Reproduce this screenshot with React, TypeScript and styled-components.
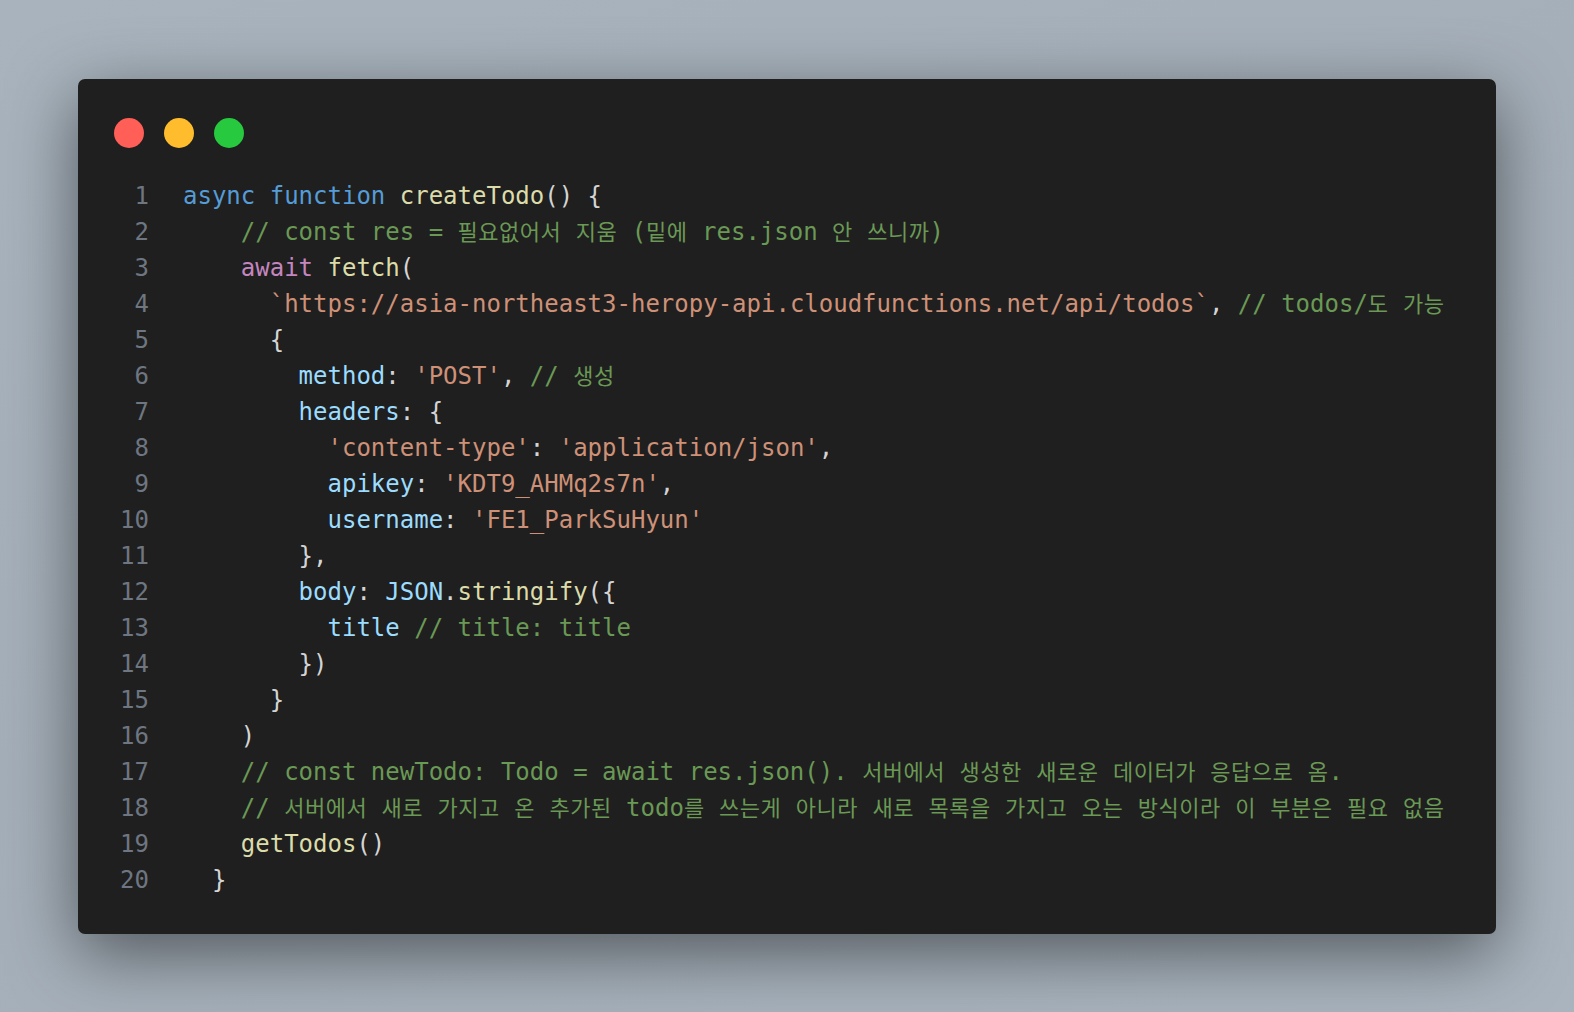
import React from "react";
import styled, { createGlobalStyle } from "styled-components";

const Global = createGlobalStyle`
  html, body { margin: 0; padding: 0; }
  body {
    background: linear-gradient(160deg, #a8b3bd 0%, #a4aeb8 50%, #a9b4be 100%);
    font-family: "DejaVu Sans Mono", "Liberation Mono", monospace;
  }
`;

const Stage = styled.div`
  min-height: 100vh;
  display: flex;
  align-items: center;
  justify-content: center;
`;

const Window = styled.div`
  width: 1418px;
  box-sizing: border-box;
  padding: 39px 36px 36px 36px;
  background: #1f1f1f;
  border-radius: 7px;
  box-shadow: 0 20px 68px rgba(0, 0, 0, 0.5);
  display: flex;
  flex-direction: column;
  gap: 30px;
`;

const Controls = styled.div`
  display: flex;
  gap: 20px;
  height: 30px;
`;

const Dot = styled.span<{ $c: string }>`
  width: 30px;
  height: 30px;
  border-radius: 50%;
  background: ${(p) => p.$c};
`;

const Code = styled.div`
  display: flex;
  flex-direction: column;
  font-family: "DejaVu Sans Mono", "Liberation Mono", monospace;
  font-size: 24px;
  line-height: 36px;
  color: #d4d4d4;
`;

const Row = styled.div`
  display: flex;
  height: 36px;
  white-space: pre;
`;

const Num = styled.span`
  width: 35px;
  flex: none;
  text-align: right;
  color: #6e7681;
  margin-right: 34px;
`;

const colors: Record<string, string> = {
  k: "#569cd6",
  f: "#dcdcaa",
  c: "#6a9955",
  a: "#c586c0",
  s: "#ce9178",
  p: "#9cdcfe",
  j: "#9cdcfe",
  t: "#d4d4d4",
};

const Tok = styled.span<{ $k: string }>`
  color: ${(p) => colors[p.$k]};
`;

const Ko = styled.span`
  font-family: "Noto Sans CJK KR", "Noto Sans", sans-serif;
  font-size: 22px;
  line-height: 0;
  letter-spacing: 0.5px;
`;

type T = [string, string];

const lines: T[][] = [
  [["k", "async"], ["t", " "], ["k", "function"], ["t", " "], ["f", "createTodo"], ["t", "() {"]],
  [["t", "    "], ["c", "// const res = 필요없어서 지움 (밑에 res.json 안 쓰니까)"]],
  [["t", "    "], ["a", "await"], ["t", " "], ["f", "fetch"], ["t", "("]],
  [
    ["t", "      "],
    ["s", "`https://asia-northeast3-heropy-api.cloudfunctions.net/api/todos`"],
    ["t", ", "],
    ["c", "// todos/도 가능"],
  ],
  [["t", "      {"]],
  [["t", "        "], ["p", "method"], ["t", ": "], ["s", "'POST'"], ["t", ", "], ["c", "// 생성"]],
  [["t", "        "], ["p", "headers"], ["t", ": {"]],
  [["t", "          "], ["s", "'content-type'"], ["t", ": "], ["s", "'application/json'"], ["t", ","]],
  [["t", "          "], ["p", "apikey"], ["t", ": "], ["s", "'KDT9_AHMq2s7n'"], ["t", ","]],
  [["t", "          "], ["p", "username"], ["t", ": "], ["s", "'FE1_ParkSuHyun'"]],
  [["t", "        },"]],
  [["t", "        "], ["p", "body"], ["t", ": "], ["j", "JSON"], ["t", "."], ["f", "stringify"], ["t", "({"]],
  [["t", "          "], ["p", "title"], ["t", " "], ["c", "// title: title"]],
  [["t", "        })"]],
  [["t", "      }"]],
  [["t", "    )"]],
  [["t", "    "], ["c", "// const newTodo: Todo = await res.json(). 서버에서 생성한 새로운 데이터가 응답으로 옴."]],
  [["t", "    "], ["c", "// 서버에서 새로 가지고 온 추가된 todo를 쓰는게 아니라 새로 목록을 가지고 오는 방식이라 이 부분은 필요 없음"]],
  [["t", "    "], ["f", "getTodos"], ["t", "()"]],
  [["t", "  }"]],
];

function renderText(text: string) {
  const parts = text.split(/([\u3131-\uD79D]+)/);
  return parts.map((part, i) =>
    i % 2 === 1 ? <Ko key={i}>{part}</Ko> : <React.Fragment key={i}>{part}</React.Fragment>
  );
}

export default function App() {
  return (
    <>
      <Global />
      <Stage>
        <Window>
          <Controls>
            <Dot $c="#ff5f56" />
            <Dot $c="#ffbd2e" />
            <Dot $c="#27c93f" />
          </Controls>
          <Code>
            {lines.map((toks, i) => (
              <Row key={i}>
                <Num>{i + 1}</Num>
                <span>
                  {toks.map(([k, text], j) => (
                    <Tok key={j} $k={k}>
                      {renderText(text)}
                    </Tok>
                  ))}
                </span>
              </Row>
            ))}
          </Code>
        </Window>
      </Stage>
    </>
  );
}
